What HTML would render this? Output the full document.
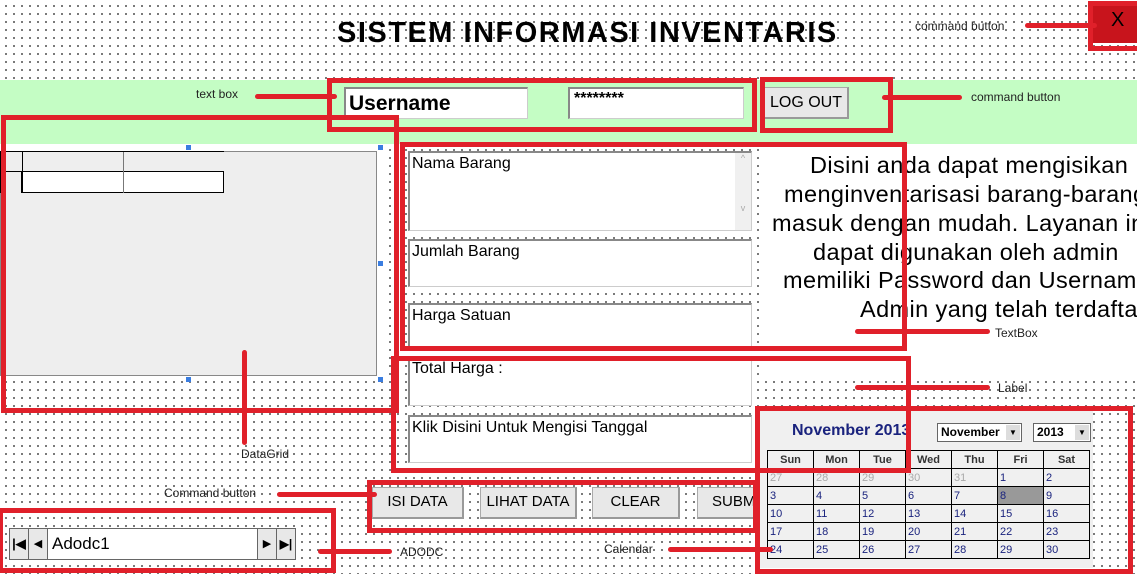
<!DOCTYPE html>
<html><head><meta charset="utf-8"><style>
*{margin:0;padding:0;box-sizing:border-box}
body{width:1137px;height:568px;overflow:hidden;position:relative;background:#fff;
background-image:radial-gradient(circle,#555 0.8px,transparent 1.1px);background-size:8px 8px;background-position:2px 2px;
font-family:"Liberation Sans",sans-serif;color:#000}
.a{position:absolute}
.r{position:absolute;border:5px solid #e0202a}
.ln{position:absolute;background:#e0202a;height:5px;border-radius:3px}
.note{position:absolute;font-size:12px;color:#222;white-space:nowrap}
.tb{position:absolute;background:#fff;border:1px solid #ccc;border-top:2px solid #888;border-left:2px solid #888;font-size:16px;padding:2px 2px;white-space:nowrap}
.btn{position:absolute;background:#e8e8e8;border:1px solid #aaa;border-right:2px solid #999;border-bottom:2px solid #999;font-size:15px;text-align:center;line-height:28px;white-space:nowrap;overflow:hidden}
.lab{position:absolute;font-size:23.5px;white-space:nowrap;letter-spacing:0.4px}
table.cal{border-collapse:collapse;position:absolute;left:767px;top:450px;font-size:11px}
table.cal td{border:1px solid #000;width:46px;height:18px;padding:0 2px;color:#1a237e;background:#f0f0f0}
table.cal tr.h td{text-align:center;font-weight:bold;color:#333}
table.cal td.g{color:#aaa}
</style></head><body>
<div class="a" style="left:0;top:80px;width:1137px;height:64px;background:#c4fdc4"></div>
<div class="a" style="left:0;top:144px;width:386px;height:236px;background:#fff"></div>
<div class="a" style="left:762px;top:144px;width:375px;height:232px;background:#fff"></div>
<div class="a" style="left:337px;top:0;width:520px;height:66px;font-size:29px;font-weight:bold;line-height:66px;letter-spacing:1.5px;white-space:nowrap">SISTEM INFORMASI INVENTARIS</div>
<div class="a" style="left:1093px;top:3px;width:44px;height:40px;background:#c8141c;color:#000;font-size:20px;padding:6px 0 0 18px">X</div>

<!-- datagrid -->
<div class="a" style="left:0;top:151px;width:377px;height:225px;background:#eee;border:1px solid #888"></div>
<div class="a" style="left:0;top:151px;width:224px;height:42px;border:1px solid #000;background:#fff">
 <div class="a" style="left:0;top:0;width:223px;height:20px;background:#eee;border-bottom:1px solid #000"></div>
 <div class="a" style="left:21px;top:0;width:1px;height:41px;background:#000"></div>
 <div class="a" style="left:122px;top:0;width:1px;height:41px;background:#777"></div>
 <div class="a" style="left:0;top:20px;width:21px;height:21px;background:#eee;border-right:1px solid #000"></div>
</div>
<div class="a" style="left:186px;top:145px;width:5px;height:5px;background:#3a7de0"></div>
<div class="a" style="left:378px;top:145px;width:5px;height:5px;background:#3a7de0"></div>
<div class="a" style="left:378px;top:261px;width:5px;height:5px;background:#3a7de0"></div>
<div class="a" style="left:186px;top:377px;width:5px;height:5px;background:#3a7de0"></div>
<div class="a" style="left:378px;top:377px;width:5px;height:5px;background:#3a7de0"></div>

<!-- login -->
<div class="tb" style="left:344px;top:87px;width:184px;height:32px;font-size:21px;font-weight:bold;padding:3px">Username</div>
<div class="tb" style="left:568px;top:87px;width:176px;height:32px;font-size:16px;font-weight:bold;padding:1px 4px">********</div>
<div class="btn" style="left:764px;top:87px;width:85px;height:32px;font-size:16px;line-height:30px">LOG OUT</div>

<!-- textboxes -->
<div class="tb" style="left:408px;top:151px;width:344px;height:80px">Nama Barang<div class="a" style="right:0;top:0;width:16px;height:77px;background:#f0f0f0;color:#aaa;font-size:9px;text-align:center">^<br><br><br><br><br>v</div></div>
<div class="tb" style="left:408px;top:239px;width:344px;height:48px">Jumlah Barang</div>
<div class="tb" style="left:408px;top:303px;width:344px;height:45px">Harga Satuan</div>
<div class="tb" style="left:408px;top:357px;width:344px;height:49px;border-top:1px solid #ddd">Total Harga :</div>
<div class="tb" style="left:408px;top:415px;width:344px;height:48px">Klik Disini Untuk Mengisi Tanggal</div>

<!-- label -->
<div class="lab" style="left:810px;top:152px">Disini anda dapat mengisikan</div>
<div class="lab" style="left:784px;top:181px">menginventarisasi barang-barang</div>
<div class="lab" style="left:772px;top:210px">masuk dengan mudah. Layanan ini</div>
<div class="lab" style="left:813px;top:239px">dapat digunakan oleh admin</div>
<div class="lab" style="left:783px;top:267px">memiliki Password dan Username</div>
<div class="lab" style="left:860px;top:296px">Admin yang telah terdaftar</div>

<!-- buttons -->
<div class="btn" style="left:372px;top:487px;width:92px;height:32px">ISI DATA</div>
<div class="btn" style="left:480px;top:487px;width:97px;height:32px">LIHAT DATA</div>
<div class="btn" style="left:592px;top:487px;width:88px;height:32px">CLEAR</div>
<div class="btn" style="left:697px;top:487px;width:100px;height:32px;text-align:left;padding-left:14px">SUBMIT</div>

<!-- adodc -->
<div class="a" style="left:9px;top:528px;width:287px;height:32px;background:#fff;border:1px solid #666;font-size:17px">
 <div class="a" style="left:0;top:0;width:19px;height:30px;background:#e8e8e8;border-right:1px solid #666;font-size:13px;line-height:30px;text-align:center;font-weight:bold">|◀</div>
 <div class="a" style="left:19px;top:0;width:19px;height:30px;background:#e8e8e8;border-right:1px solid #666;font-size:11px;line-height:30px;text-align:center">◀</div>
 <div class="a" style="left:42px;top:5px">Adodc1</div>
 <div class="a" style="left:247px;top:0;width:19px;height:30px;background:#e8e8e8;border-left:1px solid #666;font-size:11px;line-height:30px;text-align:center">▶</div>
 <div class="a" style="left:266px;top:0;width:19px;height:30px;background:#e8e8e8;border-left:1px solid #666;font-size:12px;line-height:30px;text-align:center;font-weight:bold">▶|</div>
</div>

<!-- calendar -->
<div class="a" style="left:760px;top:410px;width:333px;height:158px;background:#f0f0f0"></div>
<div class="a" style="left:792px;top:422px;font-size:16px;font-weight:bold;color:#1a237e">November 2013</div>
<div class="a" style="left:937px;top:423px;width:85px;height:19px;background:#fff;border:1px solid #666;font-size:12px;font-weight:bold;padding:1px 3px">November<span class="a" style="right:1px;top:1px;width:14px;height:15px;background:#ddd;font-size:8px;text-align:center;line-height:15px">▼</span></div>
<div class="a" style="left:1033px;top:423px;width:58px;height:19px;background:#fff;border:1px solid #666;font-size:12px;font-weight:bold;padding:1px 3px">2013<span class="a" style="right:1px;top:1px;width:14px;height:15px;background:#ddd;font-size:8px;text-align:center;line-height:15px">▼</span></div>
<table class="cal">
<tr class="h"><td>Sun</td><td>Mon</td><td>Tue</td><td>Wed</td><td>Thu</td><td>Fri</td><td>Sat</td></tr>
<tr><td class="g">27</td><td class="g">28</td><td class="g">29</td><td class="g">30</td><td class="g">31</td><td>1</td><td>2</td></tr>
<tr><td>3</td><td>4</td><td>5</td><td>6</td><td>7</td><td style="background:#999">8</td><td>9</td></tr>
<tr><td>10</td><td>11</td><td>12</td><td>13</td><td>14</td><td>15</td><td>16</td></tr>
<tr><td>17</td><td>18</td><td>19</td><td>20</td><td>21</td><td>22</td><td>23</td></tr>
<tr><td>24</td><td>25</td><td>26</td><td>27</td><td>28</td><td>29</td><td>30</td></tr>
</table>

<!-- red boxes -->
<div class="r" style="left:1088px;top:1px;width:60px;height:50px"></div>
<div class="r" style="left:327px;top:78px;width:430px;height:54px"></div>
<div class="r" style="left:760px;top:77px;width:133px;height:56px"></div>
<div class="r" style="left:1px;top:115px;width:398px;height:298px"></div>
<div class="r" style="left:400px;top:142px;width:507px;height:209px"></div>
<div class="r" style="left:391px;top:356px;width:520px;height:117px"></div>
<div class="r" style="left:367px;top:480px;width:391px;height:53px"></div>
<div class="r" style="left:-2px;top:508px;width:338px;height:65px"></div>
<div class="r" style="left:755px;top:406px;width:378px;height:168px"></div>

<!-- annotation lines -->
<div class="ln" style="left:255px;top:94px;width:82px"></div>
<div class="ln" style="left:1025px;top:23px;width:72px"></div>
<div class="ln" style="left:882px;top:95px;width:80px"></div>
<div class="ln" style="left:242px;top:350px;width:5px;height:95px"></div>
<div class="ln" style="left:855px;top:329px;width:135px"></div>
<div class="ln" style="left:855px;top:385px;width:135px"></div>
<div class="ln" style="left:277px;top:492px;width:100px"></div>
<div class="ln" style="left:318px;top:549px;width:74px"></div>
<div class="ln" style="left:668px;top:547px;width:105px"></div>

<div class="note" style="left:196px;top:87px">text box</div>
<div class="note" style="left:915px;top:19px">command button</div>
<div class="note" style="left:971px;top:90px">command button</div>
<div class="note" style="left:241px;top:447px">DataGrid</div>
<div class="note" style="left:995px;top:326px">TextBox</div>
<div class="note" style="left:998px;top:381px">Label</div>
<div class="note" style="left:164px;top:486px">Command button</div>
<div class="note" style="left:400px;top:545px">ADODC</div>
<div class="note" style="left:604px;top:542px">Calendar</div>
</body></html>
